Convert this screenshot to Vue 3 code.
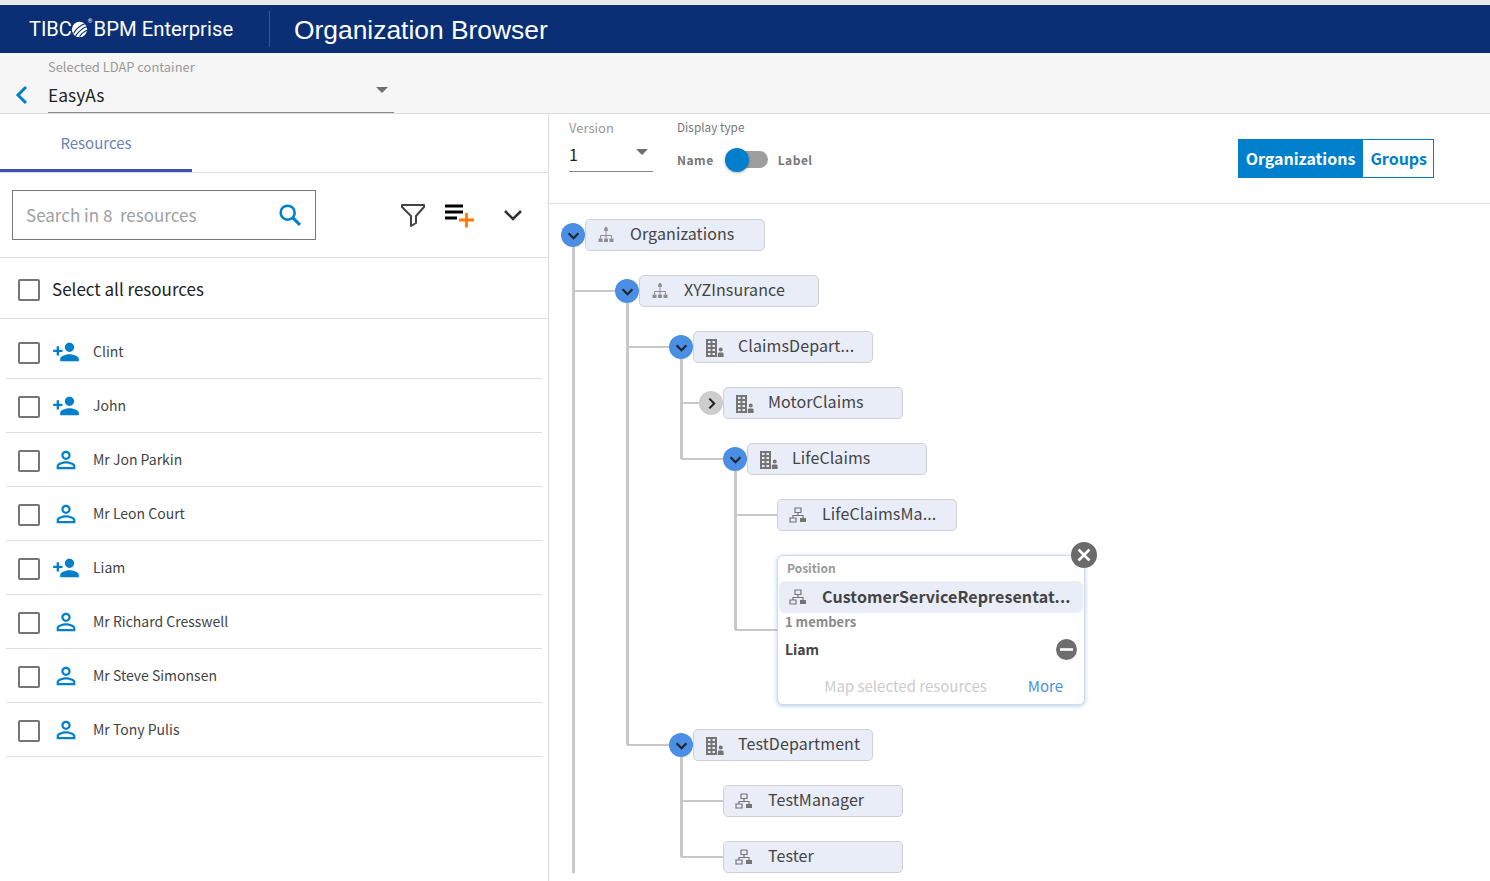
<template>
  <div class="page">
    <header class="top">
      <div class="brand">
        <span>TIBC</span>
        <svg class="logo" viewBox="0 0 20 20" width="17" height="17">
          <circle cx="10" cy="10" r="9" fill="#fff" />
          <path d="M3 14.5 C7 8 11 5 17 3 M5.5 17.5 C10 11 14 8 19 6.5 M10 18.5 C13 14 16 12 19 11" stroke="#0a2f75" stroke-width="1.3" fill="none" />
        </svg>
        <span class="reg">®</span>
        <span class="product">BPM Enterprise</span>
      </div>
      <div class="title">Organization Browser</div>
    </header>

    <div class="subbar">
      <svg class="back" viewBox="0 0 14 20" width="14" height="20">
        <path d="M11 2 L3 10 L11 18" fill="none" stroke="#0080cc" stroke-width="3" />
      </svg>
      <div class="ldap">
        <label>Selected LDAP container</label>
        <div class="ldap-value">
          <span>EasyAs</span>
          <i class="caret"></i>
        </div>
      </div>
    </div>

    <div class="main">
      <!-- Left side: resources -->
      <aside class="left">
        <div class="tabs">
          <div class="tab">Resources</div>
        </div>
        <div class="tools">
          <div class="search">
            <span>Search in 8&nbsp; resources</span>
            <svg viewBox="0 0 24 24" width="28" height="28">
              <circle cx="10" cy="10" r="6" fill="none" stroke="#0080cc" stroke-width="2.2" />
              <path d="M14.5 14.5 L20.5 20.5" stroke="#0080cc" stroke-width="2.6" />
            </svg>
          </div>
          <svg class="filter" viewBox="0 0 26 26" width="26" height="26">
            <path d="M2 3 H24 V5 L16 14 V21 L11 24 V14 L2 5 Z" fill="none" stroke="#444" stroke-width="2" stroke-linejoin="round" />
          </svg>
          <svg class="listadd" viewBox="0 0 32 24" width="32" height="24">
            <path d="M1 2 H19 M1 8 H19 M1 14 H13" stroke="#000" stroke-width="3" />
            <path d="M15 16 H30 M22.5 9 V23.5" stroke="#ff7a00" stroke-width="2.8" />
          </svg>
          <svg class="chev" viewBox="0 0 20 12" width="20" height="12">
            <path d="M2 2 L10 10 L18 2" fill="none" stroke="#333" stroke-width="2.6" />
          </svg>
        </div>
        <div class="select-all">
          <i class="check"></i>
          <span>Select all resources</span>
        </div>
        <ul class="people">
          <li v-for="p in people" :key="p.name">
            <i class="check"></i>
            <svg class="person" viewBox="0 0 24 24" width="28" height="28" fill="#0080cc">
              <path v-if="p.added" d="M15 12c2.21 0 4-1.79 4-4s-1.79-4-4-4-4 1.79-4 4 1.79 4 4 4zm-9-2V7H4v3H1v2h3v3h2v-3h3v-2H6zm9 4c-2.67 0-8 1.34-8 4v2h16v-2c0-2.66-5.33-4-8-4z" />
              <path v-else d="M12 5.9c1.16 0 2.1.94 2.1 2.1s-.94 2.1-2.1 2.1S9.9 9.16 9.9 8s.94-2.1 2.1-2.1m0 9c2.97 0 6.1 1.46 6.1 2.1v1.1H5.9V17c0-.64 3.13-2.1 6.1-2.1M12 4C9.79 4 8 5.79 8 8s1.79 4 4 4 4-1.79 4-4-1.79-4-4-4zm0 9c-2.67 0-8 1.34-8 4v3h16v-3c0-2.66-5.33-4-8-4z" />
            </svg>
            <span class="pname">{{ p.name }}</span>
          </li>
        </ul>
      </aside>

      <!-- Right side: organization tree -->
      <section class="right">
        <div class="options">
          <div class="version">
            <label>Version</label>
            <div class="version-value"><span>1</span><i class="caret"></i></div>
          </div>
          <div class="display">
            <label>Display type</label>
            <div class="toggle-row">
              <b>Name</b>
              <div class="toggle"><i></i></div>
              <b>Label</b>
            </div>
          </div>
          <div class="segment">
            <div class="seg on">Organizations</div>
            <div class="seg">Groups</div>
          </div>
        </div>

        <div class="tree">
          <svg class="lines" viewBox="549 204 941 677" width="941" height="677">
            <g stroke="#c8c8c8" fill="none">
              <path d="M573.5 247 V873 M627.5 303 V745 M681.5 359 V459 M681.5 757 V857 M735.5 471 V630" stroke-width="3" />
              <path d="M575 291 H616 M629 347 H670 M627 745 H670 M681 403 H700 M681 459 H724 M735 515 H778 M735 630 H778 M681 801 H724 M681 857 H724" stroke-width="2" />
            </g>
          </svg>

          <template v-for="n in nodes" :key="n.name">
            <div v-if="n.card" class="row" :style="{ paddingLeft: n.indent + 'px' }">
              <div class="card">
                <span class="close">
                  <svg viewBox="0 0 26 26" width="26" height="26">
                    <circle cx="13" cy="13" r="13" fill="#6a6a6a" />
                    <path d="M7.5 7.5 L18.5 18.5 M18.5 7.5 L7.5 18.5" stroke="#fff" stroke-width="2.6" />
                  </svg>
                </span>
                <div class="card-type">Position</div>
                <div class="card-head">
                  <svg class="ico" viewBox="0 0 20 20" width="20" height="20"><use href="#ic-pos" /></svg>
                  <span class="txt">{{ n.name }}</span>
                </div>
                <div class="card-count">1 members</div>
                <div class="card-member">
                  <span>Liam</span>
                  <svg viewBox="0 0 21 21" width="21" height="21">
                    <circle cx="10.5" cy="10.5" r="10.5" fill="#6e6e6e" />
                    <path d="M4 10.5 H17" stroke="#fff" stroke-width="2.6" />
                  </svg>
                </div>
                <div class="card-foot">
                  <span class="map">Map selected resources</span>
                  <span class="more">More</span>
                </div>
              </div>
            </div>
            <div v-else class="row" :style="{ paddingLeft: n.indent + 'px' }">
              <span v-if="n.toggle" class="twist" :class="n.toggle">
                <svg viewBox="0 0 12 12" width="13" height="13">
                  <path :d="n.toggle === 'open' ? 'M1.5 4 L6 8.5 L10.5 4' : 'M4 1.5 L8.5 6 L4 10.5'" fill="none" stroke="#222" stroke-width="1.9" />
                </svg>
              </span>
              <div class="node">
                <svg class="ico" viewBox="0 0 20 20" width="20" height="20"><use :href="'#ic-' + n.type" /></svg>
                <span class="txt">{{ n.name }}</span>
              </div>
            </div>
          </template>

          <!-- shared node icons -->
          <svg width="0" height="0" class="defs">
            <defs>
              <g id="ic-org" fill="#8f8f8f">
                <path d="M8.2 6 V3.5 L10 1.5 L11.8 3.5 V6 Z M2.5 13.5 H6.5 V17 H2.5 Z M8 13.5 H12 V17 H8 Z M13.5 13.5 H17.5 V17 H13.5 Z" />
                <path d="M10 6 V13.5 M4.5 13.5 V10.5 H15.5 V13.5" stroke="#8f8f8f" stroke-width="1" fill="none" />
              </g>
              <g id="ic-dep" fill="#757575" transform="translate(1 0)">
                <path fill-rule="evenodd" d="M1 2 H12 V20 H1 Z M3 4 V6 H5.5 V4 Z M7.5 4 V6 H10 V4 Z M3 8 V10 H5.5 V8 Z M7.5 8 V10 H10 V8 Z M3 12 V14 H5.5 V12 Z M7.5 12 V14 H10 V12 Z M3 16 V18 H5.5 V16 Z M7.5 16 V18 H10 V16 Z" />
                <circle cx="15.7" cy="12.5" r="2" />
                <path d="M12.8 20 V17 Q12.8 15.6 14.2 15.6 H17.2 Q18.6 15.6 18.6 17 V20 Z" />
              </g>
              <g id="ic-pos">
                <path d="M7 3 H13 V7.5 H7 Z M2 13 H8 V17 H2 Z M10 10.5 V8 M5 13 V10.5 H15 V13" fill="none" stroke="#757575" stroke-width="1.2" />
                <path d="M12 13 H18 V17 H12 Z" fill="#757575" />
              </g>
            </defs>
          </svg>
        </div>
      </section>
    </div>
  </div>
</template>

<script setup>
const people = [
  { name: 'Clint', added: true },
  { name: 'John', added: true },
  { name: 'Mr Jon Parkin' },
  { name: 'Mr Leon Court' },
  { name: 'Liam', added: true },
  { name: 'Mr Richard Cresswell' },
  { name: 'Mr Steve Simonsen' },
  { name: 'Mr Tony Pulis' }
]

const nodes = [
  { name: 'Organizations', type: 'org', indent: 12, toggle: 'open' },
  { name: 'XYZInsurance', type: 'org', indent: 66, toggle: 'open' },
  { name: 'ClaimsDepart...', type: 'dep', indent: 120, toggle: 'open' },
  { name: 'MotorClaims', type: 'dep', indent: 150, toggle: 'shut' },
  { name: 'LifeClaims', type: 'dep', indent: 174, toggle: 'open' },
  { name: 'LifeClaimsMa...', type: 'pos', indent: 228 },
  { name: 'CustomerServiceRepresentat...', indent: 228, card: true },
  { name: 'TestDepartment', type: 'dep', indent: 120, toggle: 'open' },
  { name: 'TestManager', type: 'pos', indent: 174 },
  { name: 'Tester', type: 'pos', indent: 174 }
]
</script>

<style>
html,
body {
  margin: 0;
  overflow: hidden;
  background: #fff;
}
</style>

<style scoped>
.page {
  height: 881px;
  display: flex;
  flex-direction: column;
  font-family: "Noto Sans CJK SC", "Source Sans Pro", "Noto Sans", sans-serif;
  color: #333;
  border-top: 5px solid #e8e8e8;
  box-sizing: border-box;
}
.top {
  height: 48px;
  flex: none;
  background: #0a2f75;
  color: #fff;
  display: flex;
  align-items: center;
}
.brand {
  width: 240px;
  padding-left: 29px;
  height: 36px;
  display: flex;
  align-items: center;
  font-family: Roboto, sans-serif;
  font-size: 20px;
  border-right: 1px solid #3a5a94;
}
.logo {
  margin-left: -1px;
}
.reg {
  font-size: 6px;
  align-self: flex-start;
  margin: 6px 1px 0 0;
}
.product {
  font-size: 20.3px;
}
.title {
  margin-left: 24px;
  padding-top: 2px;
  font-family: "Liberation Sans", Arial, sans-serif;
  font-size: 26.4px;
  line-height: 36px;
}
.subbar {
  height: 60px;
  flex: none;
  background: #f6f6f6;
  border-bottom: 1px solid #ddd;
  display: flex;
  align-items: flex-end;
}
.back {
  margin: 0 12px 8px 15px;
}
.ldap {
  width: 346px;
  margin-left: 7px;
  border-bottom: 1px solid #888;
}
.ldap label {
  display: block;
  margin-top: -1px;
  font-size: 12.9px;
  line-height: 16px;
  color: #999;
}
.ldap-value {
  height: 37px;
  font-size: 17.4px;
  line-height: 26px;
  color: #222;
  display: flex;
  justify-content: space-between;
  padding-top: 7px;
  box-sizing: border-box;
}
.caret {
  width: 0;
  height: 0;
  border-left: 6.5px solid transparent;
  border-right: 6.5px solid transparent;
  border-top: 6.5px solid #707070;
}
.ldap-value .caret {
  margin: 5px 6px 0 0;
}
.main {
  flex: 1;
  display: flex;
  min-height: 0;
}
.left {
  width: 549px;
  box-sizing: border-box;
  flex: none;
  border-right: 1px solid #ddd;
}
.tabs {
  height: 58px;
  border-bottom: 1px solid #ddd;
}
.tab {
  width: 192px;
  height: 58px;
  box-sizing: border-box;
  border-bottom: 3px solid #3f51b5;
  text-align: center;
  font-size: 15px;
  line-height: 58px;
  color: #6b85b8;
}
.tools {
  height: 85px;
  border-bottom: 1px solid #ddd;
  display: flex;
  align-items: center;
  padding-left: 12px;
  box-sizing: border-box;
}
.search {
  width: 304px;
  height: 50px;
  box-sizing: border-box;
  border: 1px solid #777;
  display: flex;
  align-items: center;
  justify-content: space-between;
  padding: 0 11px 0 13px;
  font-size: 17px;
  color: #a0a0a0;
}
.search span {
  margin-top: -2px;
}
.filter {
  margin-left: 84px;
}
.listadd {
  margin-left: 18px;
  margin-top: 2px;
}
.chev {
  margin-left: 27px;
}
.select-all {
  height: 61px;
  box-sizing: border-box;
  border-bottom: 1px solid #ddd;
  display: flex;
  align-items: center;
  gap: 12px;
  padding-left: 18px;
  font-size: 17px;
  color: #222;
}
.check {
  display: block;
  width: 22px;
  height: 22px;
  margin-top: 3px;
  box-sizing: border-box;
  border: 2px solid #757575;
  border-radius: 2px;
  flex: none;
}
.people {
  list-style: none;
  margin: 6px 6px 0;
  padding: 0;
}
.people li {
  height: 54px;
  box-sizing: border-box;
  border-bottom: 1px solid #ddd;
  display: flex;
  align-items: center;
  padding-left: 12px;
  font-size: 14px;
  color: #444;
}
.pname {
  margin-top: -2px;
}
.person {
  margin-left: 12px;
  margin-right: 13px;
}
.right {
  flex: 1;
  min-width: 0;
}
.options {
  height: 90px;
  box-sizing: border-box;
  border-bottom: 1px solid #ddd;
  display: flex;
  padding-left: 20px;
}
.version {
  width: 84px;
  padding-top: 5px;
}
.version label {
  display: block;
  font-size: 13px;
  line-height: 17px;
  color: #999;
}
.version-value {
  height: 31px;
  margin-top: 4px;
  border-bottom: 1px solid #888;
  display: flex;
  justify-content: space-between;
  font-size: 16px;
  line-height: 28px;
  color: #222;
}
.version-value .caret {
  margin: 9px 5px 0 0;
}
.display {
  margin-left: 24px;
  padding-top: 4px;
}
.display label {
  display: block;
  font-size: 11.8px;
  line-height: 17px;
  color: #777;
}
.toggle-row {
  display: flex;
  align-items: center;
  margin-top: 16px;
  font-size: 12px;
  letter-spacing: 0.5px;
  color: #777;
}
.toggle-row b {
  font-weight: 700;
}
.toggle {
  width: 43px;
  height: 17px;
  margin: 0 10px 0 11px;
  background: #9e9e9e;
  border-radius: 9px;
  position: relative;
}
.toggle i {
  position: absolute;
  left: 0;
  top: -3.5px;
  width: 24px;
  height: 24px;
  border-radius: 50%;
  background: #0080cc;
  box-shadow: 0 1px 3px rgba(0, 0, 0, 0.3);
}
.segment {
  margin: 25px 56px 0 auto;
  height: 39px;
  display: flex;
  border: 1px solid #0080cc;
  box-sizing: border-box;
  font-size: 16px;
  font-weight: 700;
  line-height: 37px;
  color: #0080cc;
}
.seg {
  padding: 0 6px 0 7px;
}
.seg.on {
  padding: 0 8px 0 7px;
  background: #0080cc;
  color: #fff;
}
.tree {
  position: relative;
  padding-top: 15px;
  display: flex;
  flex-direction: column;
  gap: 24px;
}
.lines {
  position: absolute;
  left: 0;
  top: 0;
}
.defs {
  position: absolute;
}
.row {
  position: relative;
  display: flex;
  align-items: center;
}
.twist {
  width: 24px;
  height: 24px;
  border-radius: 50%;
  display: flex;
  align-items: center;
  justify-content: center;
  flex: none;
}
.twist.open {
  background: #4a8fe3;
}
.twist.shut {
  background: #cdcdcd;
}
.node {
  width: 180px;
  height: 32px;
  box-sizing: border-box;
  display: flex;
  align-items: center;
  padding-left: 10px;
  gap: 14px;
  background: #e9edf7;
  border: 1px solid #cfcfd6;
  border-radius: 5px;
  font-size: 16px;
  letter-spacing: 0.1px;
  color: #444;
  white-space: nowrap;
}
.txt {
  margin-top: -3px;
}
.node .txt {
  margin-top: -5px;
}
.ico {
  flex: none;
}
.card {
  position: relative;
  width: 308px;
  height: 150px;
  box-sizing: border-box;
  background: #fff;
  border: 1px solid #d2dbe8;
  border-radius: 6px;
  box-shadow: 0 1px 4px rgba(74, 144, 226, 0.45);
  padding: 0 1px;
}
.close {
  position: absolute;
  right: -13px;
  top: -14px;
  width: 26px;
  height: 26px;
}
.card-type {
  padding: 3px 0 0 8px;
  height: 25px;
  box-sizing: border-box;
  font-size: 12px;
  line-height: 17px;
  font-weight: 700;
  color: #999;
}
.card-head {
  height: 32px;
  display: flex;
  align-items: center;
  gap: 14px;
  padding-left: 9px;
  background: #e9edf7;
  border-radius: 6px;
  font-size: 16px;
  font-weight: 700;
  letter-spacing: 0.1px;
  color: #444;
  white-space: nowrap;
}
.card-count {
  padding-left: 6px;
  font-size: 13px;
  line-height: 18px;
  font-weight: 700;
  color: #8a8a8a;
}
.card-member {
  height: 36px;
  display: flex;
  align-items: center;
  justify-content: space-between;
  padding: 0 6px 0 6px;
  font-size: 14px;
  font-weight: 700;
  color: #444;
}
.card-foot {
  display: flex;
  justify-content: flex-end;
  gap: 41px;
  padding-right: 20px;
  font-size: 15px;
  line-height: 38px;
}
.map {
  color: #ccc;
}
.more {
  color: #4a90e2;
}
</style>
